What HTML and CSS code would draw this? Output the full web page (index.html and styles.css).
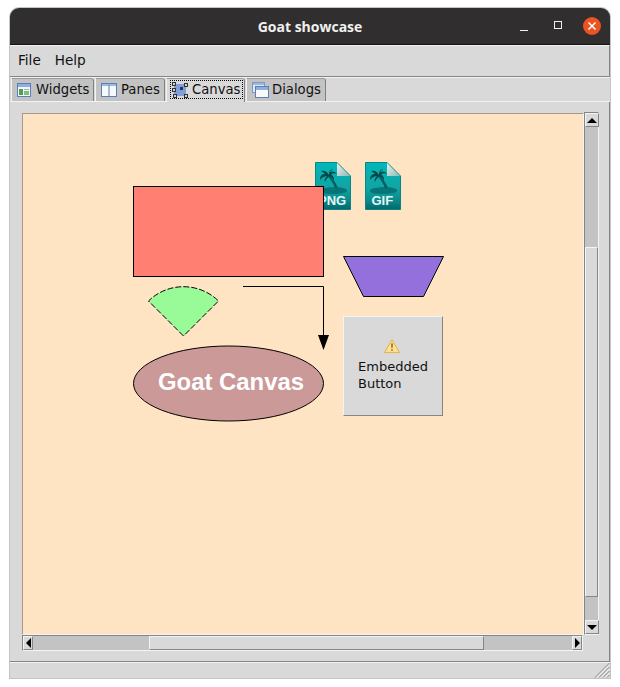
FILE: index.html
```html
<!DOCTYPE html>
<html lang="en">
<head>
    <meta charset="UTF-8">
    <title>Goat showcase</title>
    <link rel="stylesheet" href="styles.css">
</head>
<body>
    <svg width="0" height="0" class="defs">
        <defs>
            <linearGradient id="fileFill" x1="0" y1="0" x2="0" y2="1">
                <stop offset="0" stop-color="#00b8ba"/>
                <stop offset="0.55" stop-color="#13a3a3"/>
                <stop offset="0.8" stop-color="#0b8b8c"/>
                <stop offset="1" stop-color="#04676b"/>
            </linearGradient>
            <linearGradient id="foldFill" x1="0" y1="0" x2="1" y2="1">
                <stop offset="0" stop-color="#f0f3f0"/>
                <stop offset="1" stop-color="#8cb8b5"/>
            </linearGradient>
            <symbol id="fileIcon" viewBox="0 0 36 48">
                <path d="M0.5 0.5H22L35.5 14V47.5H0.5Z" fill="url(#fileFill)" stroke="#0a8587"/>
                <path d="M22 1L35 14H22Z" fill="url(#foldFill)"/>
                <path d="M5 29C5 26 10 26 18 25C26 25 32 26 32 29C32 31 25 32 18 32C10 32 5 31 5 29Z" fill="#067577"/>
                <path d="M13.5 15C16 18 18.5 22 20 26H23C21 21 18 17 15 14Z" fill="#055f62"/>
                <path d="M14 13C12 9 9 8 6 9C8 10 9 11 10 12C7 12 5 14 5 18C7 15 10 14 12 14C10 16 9 18 10 20C11 17 13 15 14.5 14.5C16 15 18 16 19 19C19.5 16 18 13.5 16 12.5C18 11 20 11 22 12C20 9 17 9 15 10C15.5 9 17 8 18 7C16 7 14 9 14 13Z" fill="#04484b"/>
            </symbol>
        </defs>
    </svg>

    <div class="window">
        <div class="titlebar">
            <span class="title">Goat showcase</span>
            <div class="controls">
                <span class="minimize"></span>
                <span class="maximize"></span>
                <svg class="close" width="18" height="18" viewBox="0 0 18 18">
                    <circle cx="9" cy="9" r="9" fill="#e95420"/>
                    <path d="M5.5 5.5L12.5 12.5M12.5 5.5L5.5 12.5" stroke="#fff" stroke-width="1.5"/>
                </svg>
            </div>
        </div>

        <div class="menubar">
            <span class="menu-item">File</span>
            <span class="menu-item">Help</span>
        </div>

        <div class="tabbar">
            <div class="tab tab-widgets">
                <svg width="16" height="16" viewBox="0 0 16 16">
                    <rect x="0.5" y="1.5" width="13" height="13" fill="#f2f6fb" stroke="#5b80b8"/>
                    <rect x="1" y="2" width="12" height="3" fill="#8fb0dc"/>
                    <rect x="2" y="7" width="4" height="6" fill="#4fa04f"/>
                    <rect x="7" y="7" width="5" height="1" fill="#9ab4d4"/>
                    <rect x="7" y="9" width="5" height="4" fill="#7cc07c"/>
                </svg>
                <span>Widgets</span>
            </div>
            <div class="tab tab-panes">
                <svg width="16" height="16" viewBox="0 0 16 16">
                    <rect x="0.5" y="1.5" width="15" height="13" fill="#f7f9fc" stroke="#5b80b8"/>
                    <rect x="1" y="2" width="14" height="2" fill="#9db9e0"/>
                    <rect x="7.5" y="3" width="1" height="11" fill="#5b80b8"/>
                </svg>
                <span>Panes</span>
            </div>
            <div class="tab tab-canvas selected">
                <div class="tab-focus">
                    <svg width="16" height="16" viewBox="0 0 16 16">
                        <rect x="2" y="2" width="12" height="12" fill="#7f9fdc"/>
                        <rect x="0.5" y="0.5" width="3" height="3" fill="#d0d0d0" stroke="#333"/>
                        <rect x="12.5" y="1.5" width="3" height="3" fill="#d0d0d0" stroke="#333"/>
                        <rect x="0.5" y="6.5" width="3" height="3" fill="#d0d0d0" stroke="#333"/>
                        <rect x="1.5" y="12.5" width="3" height="3" fill="#d0d0d0" stroke="#333"/>
                        <rect x="12.5" y="12.5" width="3" height="3" fill="#d0d0d0" stroke="#333"/>
                        <rect x="8" y="5" width="3" height="3" fill="#333"/>
                    </svg>
                    <span>Canvas</span>
                </div>
            </div>
            <div class="tab tab-dialogs">
                <svg width="18" height="16" viewBox="0 0 18 16">
                    <rect x="0.5" y="0.5" width="12" height="10" fill="#dfe7f3" stroke="#7d98c4"/>
                    <rect x="1" y="1" width="11" height="2" fill="#9db9e0"/>
                    <rect x="3.5" y="4.5" width="13" height="11" fill="#f7f9fc" stroke="#5b80b8"/>
                    <rect x="4" y="5" width="12" height="3" fill="#8fb0dc"/>
                </svg>
                <span>Dialogs</span>
            </div>
        </div>

        <div class="pane">
            <div class="scroll-grid">
                <div class="canvas">
                    <svg class="drawing" width="561" height="521" viewBox="22 113 561 521">
                        <use href="#fileIcon" x="315" y="162" width="36" height="48"/>
                        <text x="318" y="205" class="file-label">PNG</text>
                        <use href="#fileIcon" x="365" y="162" width="36" height="48"/>
                        <text x="371.5" y="205" class="file-label">GIF</text>

                        <rect x="133.5" y="186.5" width="190" height="90" fill="#ff8072" stroke="#000"/>
                        <polygon points="343.5,256.5 443.5,256.5 423.5,296.5 363.5,296.5" fill="#9370db" stroke="#000"/>
                        <path d="M183.5 336L148.5 301A50 50 0 0 1 218.5 301Z" fill="#98fb98" stroke="#000" stroke-dasharray="6 2"/>
                        <path d="M243 286.5H323.5V336" fill="none" stroke="#000"/>
                        <path d="M318 335H329L323.5 350Z" fill="#000"/>
                        <ellipse cx="228.5" cy="383.5" rx="95" ry="37.5" fill="#cc9999" stroke="#000"/>
                        <text x="231" y="390" class="canvas-label">Goat Canvas</text>
                    </svg>

                    <div class="embedded-button">
                        <svg class="warn" width="16" height="14" viewBox="0 0 16 14">
                            <path d="M8 0.8L15.4 13.4H0.6Z" fill="#fbe49a" stroke="#e9ae3e" stroke-linejoin="round"/>
                            <path d="M7 4.5H9L8.6 9H7.4Z" fill="#a06c12"/>
                            <rect x="7.2" y="10" width="1.6" height="1.6" fill="#a06c12"/>
                        </svg>
                        <div class="button-label">Embedded<br>Button</div>
                    </div>
                </div>

                <div class="scrollbar vertical">
                    <div class="arrow"><span class="tri tri-up"></span></div>
                    <div class="trough trough-v1"></div>
                    <div class="thumb"></div>
                    <div class="trough trough-v2"></div>
                    <div class="arrow"><span class="tri tri-down"></span></div>
                </div>

                <div class="scrollbar horizontal">
                    <div class="arrow"><span class="tri tri-left"></span></div>
                    <div class="trough trough-h1"></div>
                    <div class="thumb"></div>
                    <div class="trough trough-h2"></div>
                    <div class="arrow"><span class="tri tri-right"></span></div>
                </div>
            </div>
        </div>

        <div class="statusbar">
            <svg class="grip" width="16" height="16" viewBox="0 0 16 16">
                <path d="M15.5 1L1 15.5M15.5 5L5 15.5M15.5 9L9 15.5M15.5 13L13 15.5" stroke="#8a8a8a" fill="none"/>
                <path d="M15.5 3L3 15.5M15.5 7L7 15.5M15.5 11L11 15.5" stroke="#f4f4f4" fill="none"/>
            </svg>
        </div>
    </div>
</body>
</html>
```

FILE: styles.css
```css
html,body{
    margin:0px;
    padding:0px;
    background-color:#fff;
}
body{
    width:620px;
    height:687px;
    overflow:hidden;
    font-family:"DejaVu Sans",sans-serif;
    font-size:13.2px;
    color:#000;
}
.defs{
    display:block;
    height:0;
}
.window{
    width:600px;
    height:670px;
    margin:8px 0 0 10px;
    display:flex;
    flex-direction:column;
    background-color:#d9d9d9;
    border-radius:9px 9px 0 0;
    box-shadow:0 0 0 1px #c4c4c4;
}

/* title bar */
.titlebar{
    height:36px;
    flex:none;
    display:flex;
    align-items:center;
    justify-content:center;
    position:relative;
    background-color:#302e2e;
    border-bottom:1px solid #131313;
    border-radius:9px 9px 0 0;
    box-sizing:content-box;
}
.title{
    font-family:"Open Sans","Noto Sans",sans-serif;
    font-size:14px;
    font-weight:700;
    color:#f0f0f0;
}
.controls{
    position:absolute;
    right:9px;
    top:9px;
    display:flex;
    align-items:center;
}
.minimize{
    width:8px;
    height:1px;
    margin:8px 26px 0 0;
    background-color:#f0f0f0;
}
.maximize{
    width:6px;
    height:6px;
    margin:-2px 21px 0 0;
    border:1px solid #f0f0f0;
}
.close{
    display:block;
}

/* menu */
.menubar{
    height:28px;
    padding-bottom:2px;
    flex:none;
    display:flex;
    align-items:center;
    padding-left:8px;
    gap:14px;
    font-size:13.6px;
    border-top:1px solid #f2f2f2;
    border-bottom:1px solid #858585;
    border-right:1px solid #858585;
    color:#111;
}

/* tabs */
.tabbar{
    height:23px;
    flex:none;
    display:flex;
    align-items:flex-end;
    padding-left:1px;
    border-top:1px solid #f2f2f2;
    border-bottom:1px solid #f2f2f2;
    box-sizing:content-box;
}
.tab{
    height:23px;
    padding-bottom:1px;
    display:flex;
    align-items:center;
    gap:3px;
    box-sizing:border-box;
    padding-left:5px;
    margin-right:1px;
    background-color:#c3c3c3;
    border-top:1px solid #9a9a9a;
    border-left:1px solid #f2f2f2;
    border-right:1px solid #808080;
    border-top-right-radius:3px;
    color:#111;
}
.tab svg{
    display:block;
    flex:none;
}
.tab-widgets{
    width:83px;
}
.tab-panes{
    width:70px;
    gap:4px;
}
.tab-canvas{
    width:79px;
}
.tab-dialogs{
    width:80px;
    gap:2px;
}
.tab.selected{
    height:24px;
    margin-bottom:-1px;
    padding-left:3px;
    padding-bottom:2px;
    background-color:#d9d9d9;
    position:relative;
}
.tab-focus{
    display:flex;
    align-items:center;
    gap:4px;
    height:19px;
    padding:0 0 0 2px;
    width:73px;
    box-sizing:border-box;
    outline:1px dotted #000;
    outline-offset:-1px;
}

/* main pane */
.pane{
    flex:1;
    min-height:0;
    padding:11px 11px 10px 12px;
    border-right:1px solid #858585;
    border-bottom:1px solid #858585;
    box-sizing:border-box;
}
.scroll-grid{
    display:grid;
    grid-template-columns:561px 15px;
    grid-template-rows:521px 16px;
    column-gap:1px;
    row-gap:1px;
}
.canvas{
    position:relative;
    width:561px;
    height:521px;
    overflow:hidden;
    background-color:#ffe4c4;
    box-shadow:inset 1px 1px 0 #a89a86, 1px 1px 0 #f4f4f4;
}
.drawing{
    position:absolute;
    left:0;
    top:0;
}
.file-label{
    font-family:"Liberation Sans",sans-serif;
    font-size:13px;
    font-weight:700;
    fill:#e6f7f7;
}
.canvas-label{
    font-family:"Liberation Sans",sans-serif;
    font-size:23.9px;
    font-weight:700;
    fill:#fff;
    text-anchor:middle;
}
.embedded-button{
    position:absolute;
    left:321px;
    top:203px;
    width:100px;
    height:100px;
    box-sizing:border-box;
    padding:22px 0 0 14px;
    background-color:#d9d9d9;
    border-top:1px solid #f4f4f4;
    border-left:1px solid #f4f4f4;
    border-right:1px solid #858585;
    border-bottom:1px solid #858585;
    color:#111;
    font-size:13px;
}
.warn{
    display:block;
    margin:0 0 5px 26px;
}
.button-label{
    line-height:17px;
}

/* scrollbars */
.scrollbar{
    display:flex;
    background-color:#c3c3c3;
    box-sizing:border-box;
    border-top:1px solid #858585;
    border-left:1px solid #858585;
    border-right:1px solid #f4f4f4;
    border-bottom:1px solid #f4f4f4;
}
.vertical{
    flex-direction:column;
    height:523px;
    margin-top:-1px;
}
.horizontal{
    height:16px;
    grid-column:1;
}
.arrow{
    flex:none;
    width:12px;
    height:12px;
    display:flex;
    align-items:center;
    justify-content:center;
    background-color:#d9d9d9;
    border-top:1px solid #f4f4f4;
    border-left:1px solid #f4f4f4;
    border-right:1px solid #858585;
    border-bottom:1px solid #858585;
    box-sizing:content-box;
}
.horizontal .arrow{
    width:8px;
    height:12px;
}
.thumb{
    background-color:#d9d9d9;
    box-sizing:border-box;
    border-top:1px solid #f4f4f4;
    border-left:1px solid #f4f4f4;
    border-right:1px solid #858585;
    border-bottom:1px solid #858585;
}
.vertical .thumb{
    height:350px;
    flex:none;
}
.horizontal .thumb{
    width:335px;
    flex:none;
}
.trough-v1{
    height:120px;
    flex:none;
}
.trough-v2{
    flex:1;
}
.trough-h1{
    width:116px;
    flex:none;
}
.trough-h2{
    flex:1;
}
.tri{
    width:0;
    height:0;
    display:block;
    border-style:solid;
    border-color:transparent;
}
.tri-up{
    border-width:0 5px 5px 5px;
    border-bottom-color:#000;
}
.tri-down{
    border-width:5px 5px 0 5px;
    border-top-color:#000;
}
.tri-left{
    border-width:5px 5px 5px 0;
    border-right-color:#000;
}
.tri-right{
    border-width:5px 0 5px 5px;
    border-left-color:#000;
}

/* status bar */
.statusbar{
    height:15px;
    flex:none;
    position:relative;
    border-top:1px solid #f2f2f2;
}
.grip{
    position:absolute;
    right:0;
    bottom:0;
}
```
